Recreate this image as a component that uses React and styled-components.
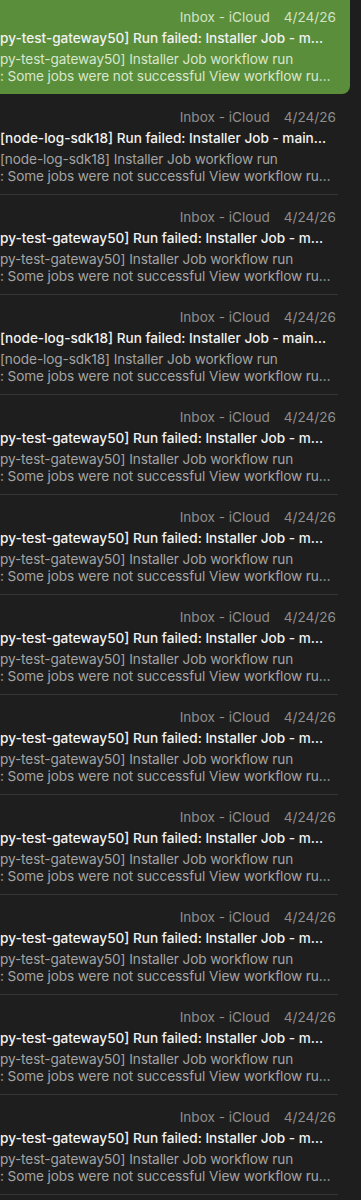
import styled, { createGlobalStyle } from 'styled-components';

const GlobalStyle = createGlobalStyle`
  html, body {
    margin: 0;
    background: #1e1e1e;
  }
  body {
    font-family: Inter, "Noto Sans", "Liberation Sans", sans-serif;
    -webkit-font-smoothing: antialiased;
  }
`;

const gateway = {
    subject: 'py-test-gateway50] Run failed: Installer Job - m…',
    preview: 'py-test-gateway50] Installer Job workflow run',
};
const nodeLog = {
    subject: '[node-log-sdk18] Run failed: Installer Job - main…',
    preview: '[node-log-sdk18] Installer Job workflow run',
};

const messages = [
    {...gateway, selected: true},
    nodeLog,
    gateway,
    nodeLog,
    gateway,
    gateway,
    gateway,
    gateway,
    gateway,
    gateway,
    gateway,
    gateway,
];

function App() {
    return (
        <>
            <GlobalStyle/>
            <List>
                {messages.map((m, i) => (
                    <Row key={i} $selected={m.selected}>
                        <Card $selected={m.selected}>
                            <Meta $selected={m.selected}>
                                <span>Inbox - iCloud</span>
                                <span>4/24/26</span>
                            </Meta>
                            <Subject>{m.subject}</Subject>
                            <Preview $selected={m.selected}>
                                <Line>{m.preview}</Line>
                                <Line>: Some jobs were not successful View workflow ru…</Line>
                            </Preview>
                        </Card>
                    </Row>
                ))}
            </List>
        </>
    )
}

const List = styled.div`
  display: flex;
  flex-direction: column;
  width: 361px;
  margin-top: -5px;
  overflow: hidden;
`;
const Row = styled.div`
  height: 100px;
  box-sizing: border-box;
  padding-right: 23px;
  display: flex;
  flex-direction: column;
  &::after{
    content: "";
    height: 1px;
    background: ${p => p.$selected ? 'transparent' : '#363636'};
  }
`;
const Card = styled.div`
  flex: 1;
  margin-right: ${p => p.$selected ? '-12px' : '0'};
  padding: 12px ${p => p.$selected ? '14px' : '2px'} 0 0;
  background: ${p => p.$selected ? '#5a8e3a' : 'transparent'};
  border-radius: 0 0 8px 0;
`;
const Meta = styled.div`
  display: flex;
  justify-content: flex-end;
  gap: 14px;
  font-size: 13.6px;
  line-height: 20px;
  color: ${p => p.$selected ? '#d3e3c8' : '#8e8e8e'};
`;
const Subject = styled.div`
  margin-top: 1px;
  font-size: 13.6px;
  line-height: 20px;
  font-weight: 500;
  color: #f2f2f2;
  white-space: nowrap;
`;
const Preview = styled.div`
  margin-top: 3px;
  font-size: 13.6px;
  line-height: 17px;
  letter-spacing: -0.1px;
  color: ${p => p.$selected ? '#d9e7cf' : '#a4a4a4'};
`;
const Line = styled.div`
  white-space: nowrap;
`;

export default App;
